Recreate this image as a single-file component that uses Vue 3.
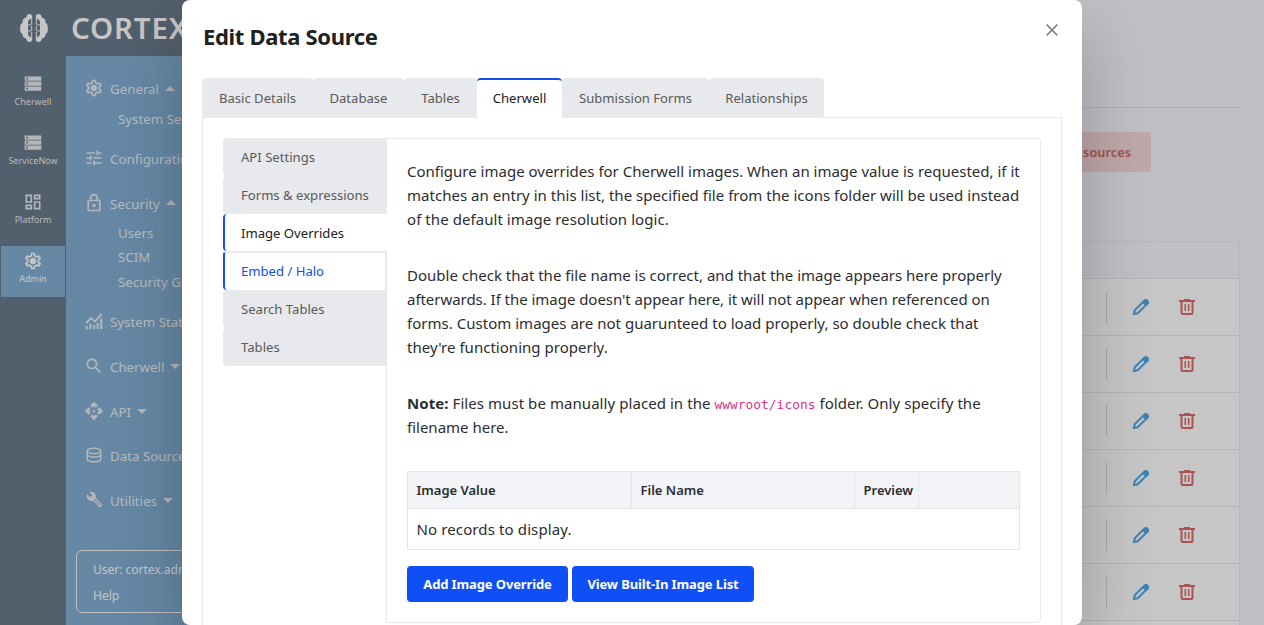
<template>
  <div class="app">
    <aside class="sidebar">
      <header class="brand">
        <svg class="logo" viewBox="0 0 28 28">
          <path d="M9.500 0C7.500 0 6.500 1.500 6.300 3.500 3.500 4 2.200 6 2.700 8.500.5 10 0 12 .3 14c-.4 2.500 0 5 2.200 6-.2 2.500 1.300 4 3.500 4.200C6.500 27 8 28 9.500 28c1.800 0 2.700-1 2.700-2.500 0-1.800-1-2.500-2.700-3L8 20.500V7.500l1.500-2c1.700-.5 2.700-1.200 2.700-3C12.200 1 11.300 0 9.500 0z" />
          <path d="M18.500 0c2 0 3 1.500 3.200 3.500 2.800.5 4.100 2.500 3.600 5 2.200 1.500 2.700 3.500 2.400 5.500.4 2.500 0 5-2.200 6 .2 2.500-1.300 4-3.500 4.200C21.500 27 20 28 18.500 28c-1.800 0-2.700-1-2.700-2.500 0-1.800 1-2.500 2.700-3l1.500-2V7.500l-1.500-2c-1.700-.5-2.700-1.200-2.700-3C15.800 1 16.700 0 18.500 0z" />
          <path class="folds" d="M11.700 3v7.500q-2 1.300-4.200 0M11.700 12v4.500q-2 1.300-4.200 0M11.700 18v7M16.300 3v7.500q2 1.300 4.200 0M16.300 12v4.500q2 1.300 4.200 0M16.300 18v7" />
        </svg>
        <span>CORTEX</span>
      </header>

      <div class="sidebar-body">
        <nav class="rail">
          <a v-for="item in railItems" :key="item.label" class="rail-item" :class="{ active: item.active }">
            <svg viewBox="0 0 24 24"><path :d="icons[item.icon]" /></svg>
            <span>{{ item.label }}</span>
          </a>
        </nav>

        <div class="menu">
          <div v-for="item in menuItems" :key="item.label" class="menu-group">
            <a class="menu-item">
              <svg viewBox="0 0 24 24" :class="item.icon">
                <path :d="icons[item.icon]" />
                <path v-if="item.icon === 'wrench'" class="groove" d="M11 11l9 9" />
              </svg>
              <span>{{ item.label }}</span>
              <i v-if="item.caret" class="caret" :class="item.caret"></i>
            </a>
            <div v-if="item.children" class="submenu">
              <a v-for="child in item.children" :key="child">{{ child }}</a>
            </div>
          </div>
        </div>
      </div>

      <div class="user-box">
        <span>User: cortex.admin</span>
        <span>Help</span>
      </div>
    </aside>

    <main class="page">
      <div class="page-head"></div>
      <button class="delete-button">sources</button>
      <div class="grid">
        <div class="grid-head"></div>
        <div v-for="n in 7" :key="n" class="grid-row">
          <span class="divider"></span>
          <svg class="edit" viewBox="0 0 18 18">
            <path d="M2 16l.7-3.700L12.600 2.400a1.600 1.600 0 0 1 2.300 0l.7.7a1.600 1.600 0 0 1 0 2.300L5.700 15.300z" />
            <path class="tip" d="M10 4.500l3-3h2l2 2v2l-3 3z" />
          </svg>
          <svg class="trash" viewBox="0 0 18 18">
            <path d="M1 3h16M6 2h6M3.500 3v11.500q0 1.500 1.500 1.500h8q1.500 0 1.500-1.500V3" />
            <path class="thin" d="M7.300 6v7M10.700 6v7" />
          </svg>
        </div>
      </div>
    </main>

    <section class="modal">
      <header class="modal-head">
        <h2>Edit Data Source</h2>
        <button class="close">
          <svg viewBox="0 0 12 12"><path d="M.7.7l10.600 10.600M11.300.7L.7 11.300" /></svg>
        </button>
      </header>

      <div class="tabs">
        <button v-for="tab in tabs" :key="tab" :class="{ active: tab === activeTab }" @click="activeTab = tab">
          {{ tab }}
        </button>
      </div>

      <div class="tab-panel">
        <div class="side-tabs">
          <button
            v-for="tab in sideTabs"
            :key="tab"
            :class="{ active: tab === activeSideTab, hovered: tab === 'Embed / Halo' }"
            @click="activeSideTab = tab"
          >
            {{ tab }}
          </button>
        </div>

        <div class="content">
          <p>
            Configure image overrides for Cherwell images. When an image value is requested, if it<br />
            <span class="loose">matches an entry in this list, the specified file from the icons folder will be used instead</span><br />
            <span class="looser">of the default image resolution logic.</span>
          </p>
          <p>
            Double check that the file name is correct, and that the image appears here properly<br />
            <span class="tight">afterwards. If the image doesn't appear here, it will not appear when referenced on</span><br />
            <span class="loose">forms. Custom images are not guarunteed to load properly, so double check that</span><br />
            <span class="loose">they're functioning properly.</span>
          </p>
          <p>
            <span class="looser"><b>Note:</b> Files must be manually placed in the <code>wwwroot/icons</code> folder. Only specify the</span><br />
            filename here.
          </p>

          <table>
            <thead>
              <tr>
                <th class="col-value">Image Value</th>
                <th class="col-file">File Name</th>
                <th class="col-preview">Preview</th>
                <th></th>
              </tr>
            </thead>
            <tbody>
              <tr>
                <td colspan="4">No records to display.</td>
              </tr>
            </tbody>
          </table>

          <div class="actions">
            <button class="add">Add Image Override</button>
            <button class="view">View Built-In Image List</button>
          </div>
        </div>
      </div>
    </section>
  </div>
</template>

<script setup>
import { ref } from 'vue'

const activeTab = ref('Cherwell')
const activeSideTab = ref('Image Overrides')

const tabs = ['Basic Details', 'Database', 'Tables', 'Cherwell', 'Submission Forms', 'Relationships']
const sideTabs = ['API Settings', 'Forms & expressions', 'Image Overrides', 'Embed / Halo', 'Search Tables', 'Tables']

const railItems = [
  { label: 'Cherwell', icon: 'storage' },
  { label: 'ServiceNow', icon: 'storage' },
  { label: 'Platform', icon: 'dashboard' },
  { label: 'Admin', icon: 'gear', active: true },
]

const menuItems = [
  { label: 'General', icon: 'gear', caret: 'up', children: ['System Settings'] },
  { label: 'Configuration', icon: 'tune' },
  { label: 'Security', icon: 'lock', caret: 'up', children: ['Users', 'SCIM', 'Security Groups'] },
  { label: 'System Status', icon: 'chart' },
  { label: 'Cherwell', icon: 'search', caret: 'down' },
  { label: 'API', icon: 'api', caret: 'down' },
  { label: 'Data Sources', icon: 'database' },
  { label: 'Utilities', icon: 'wrench', caret: 'down' },
]

const icons = {
  storage: 'M2 20h20v-5H2v5zm2-3.500h2v2H4v-2zM2 3v5h20V3H2zm4 3.500H4v-2h2v2zM2 14h20V9H2v5zm2-3.500h2v2H4v-2z',
  dashboard: 'M19 5v2h-4V5h4M9 5v6H5V5h4m10 8v6h-4v-6h4M9 17v2H5v-2h4M21 3h-8v6h8V3zM11 3H3v10h8V3zm10 8h-8v10h8V11zm-10 4H3v6h8v-6z',
  gear: 'M19.43 12.98c.04-.32.07-.64.07-.98s-.03-.66-.07-.98l2.11-1.65c.19-.15.24-.42.12-.64l-2-3.46c-.09-.16-.26-.25-.44-.25-.06 0-.12.01-.17.03l-2.49 1c-.52-.4-1.08-.73-1.69-.98l-.38-2.65C14.46 2.18 14.25 2 14 2h-4c-.25 0-.46.18-.49.42l-.38 2.65c-.61.25-1.17.59-1.69.98l-2.49-1c-.06-.02-.12-.03-.18-.03-.17 0-.34.09-.43.25l-2 3.46c-.13.22-.07.49.12.64l2.11 1.65c-.04.32-.07.65-.07.98s.03.66.07.98l-2.11 1.65c-.19.15-.24.42-.12.64l2 3.46c.09.16.26.25.44.25.06 0 .12-.01.17-.03l2.49-1c.52.4 1.08.73 1.69.98l.38 2.65c.03.24.24.42.49.42h4c.25 0 .46-.18.49-.42l.38-2.65c.61-.25 1.17-.59 1.69-.98l2.49 1c.06.02.12.03.18.03.17 0 .34-.09.43-.25l2-3.46c.12-.22.07-.49-.12-.64l-2.11-1.65zm-1.98-1.71c.04.31.05.52.05.73 0 .21-.02.43-.05.73l-.14 1.13.89.7 1.08.84-.7 1.21-1.27-.51-1.04-.42-.9.68c-.43.32-.84.56-1.25.73l-1.06.43-.16 1.13-.2 1.35h-1.4l-.19-1.35-.16-1.13-1.06-.43c-.43-.18-.83-.41-1.23-.71l-.91-.7-1.06.43-1.27.51-.7-1.21 1.08-.84.89-.7-.14-1.13c-.03-.31-.05-.54-.05-.74s.02-.43.05-.73l.14-1.13-.89-.7-1.08-.84.7-1.21 1.27.51 1.04.42.9-.68c.43-.32.84-.56 1.25-.73l1.06-.43.16-1.13.2-1.35h1.39l.19 1.35.16 1.13 1.06.43c.43.18.83.41 1.23.71l.91.7 1.06-.43 1.27-.51.7 1.21-1.07.85-.89.7.14 1.13zM12 8c-2.210 0-4 1.790-4 4s1.790 4 4 4 4-1.790 4-4-1.790-4-4-4z',
  tune: 'M3 17v2h6v-2H3zM3 5v2h10V5H3zm10 16v-2h8v-2h-8v-2h-2v6h2zM7 9v2H3v2h4v2h2V9H7zm14 4v-2H11v2h10zm-6-4h2V7h4V5h-4V3h-2v6z',
  lock: 'M18 8h-1V6c0-2.760-2.240-5-5-5S7 3.240 7 6v2H6c-1.100 0-2 .9-2 2v10c0 1.100.9 2 2 2h12c1.100 0 2-.9 2-2V10c0-1.100-.9-2-2-2zM9 6c0-1.660 1.340-3 3-3s3 1.340 3 3v2H9V6zm9 14H6V10h12v10zm-6-3c1.100 0 2-.9 2-2s-.9-2-2-2-2 .9-2 2 .9 2 2 2z',
  chart: 'M2 13.500L8.500 7l4.500 4 7-8 2 1.400-8.800 9.800-4.600-4.200-5.200 5.200zM2 18h2.500v4H2zM6.500 15H9v7H6.500zM11 17h2.500v5H11zM15.200 14h2.500v8h-2.500zM19.500 9H22v13h-2.500z',
  search: 'M15.5 14h-.79l-.28-.27C15.410 12.590 16 11.110 16 9.500 16 5.910 13.090 3 9.500 3S3 5.910 3 9.500 5.910 16 9.500 16c1.610 0 3.090-.59 4.230-1.570l.27.28v.79l5 4.990L20.490 19l-4.990-5zm-6 0C7.010 14 5 11.990 5 9.500S7.010 5 9.500 5 14 7.010 14 9.500 11.990 14 9.500 14z',
  api: 'M14 12l-2 2-2-2 2-2 2 2zm-2-6l2.120 2.120 2.500-2.500L12 1 7.380 5.620l2.500 2.500L12 6zm-6 6l2.120-2.120-2.500-2.500L1 12l4.620 4.620 2.500-2.500L6 12zm12 0l-2.120 2.120 2.500 2.500L23 12l-4.620-4.620-2.500 2.500L18 12zm-6 6l-2.120-2.120-2.500 2.500L12 23l4.620-4.620-2.500-2.500L12 18z',
  database: 'M12 2C6.500 2 2 3.800 2 6.500v11C2 20.200 6.500 22 12 22s10-1.800 10-4.500v-11C22 3.800 17.500 2 12 2zm0 2c4.500 0 8 1.300 8 2.500S16.500 9 12 9 4 7.700 4 6.500 7.500 4 12 4zm8 5.300v1.900c0 1.300-3.500 2.600-8 2.600s-8-1.300-8-2.600V9.300C5.800 10.400 8.700 11 12 11s6.200-.6 8-1.700zm0 4.700v3.500c0 1.200-3.500 2.500-8 2.500s-8-1.300-8-2.500V14c1.800 1.100 4.700 1.800 8 1.800s6.200-.7 8-1.800z',
  wrench: 'M22.7 19l-9.100-9.100c.9-2.300.4-5-1.500-6.900-2-2-5-2.400-7.400-1.300L9 6 6 9 1.600 4.700C.4 7.100.9 10.100 2.900 12.100c1.900 1.900 4.600 2.400 6.900 1.500l9.100 9.100c.4.4 1 .4 1.400 0l2.300-2.300c.5-.4.5-1.100.1-1.400z',
}
</script>

<style>
body {
  overflow: hidden;
}
</style>

<style scoped>
.app {
  display: flex;
  position: relative;
  width: 1264px;
  height: 625px;
  overflow: hidden;
  background: #bfc0c5;
  font-family: "Noto Sans", "Open Sans", sans-serif;
  white-space: nowrap;
}
.app * {
  box-sizing: border-box;
}
button {
  font-family: inherit;
  border: 0;
  padding: 0;
  cursor: pointer;
}

/* sidebar */
.sidebar {
  display: flex;
  flex-direction: column;
  position: relative;
  width: 256px;
  height: 625px;
  background: #525f6c;
  color: #b9bcbe;
}
.brand {
  display: flex;
  align-items: center;
  gap: 23px;
  height: 56px;
  padding-left: 20px;
  color: #c6c6c6;
  font-size: 29.5px;
  font-weight: 600;
}
.brand span {
  margin-top: -2px;
  letter-spacing: 0.8px;
}
.logo {
  width: 28px;
  height: 28px;
  fill: #c6c6c6;
}
.folds {
  fill: none;
  stroke: #c6c6c6;
  stroke-width: 1;
}
.sidebar-body {
  display: flex;
  flex: 1;
}
.rail {
  display: flex;
  flex-direction: column;
  gap: 8px;
  width: 66px;
  padding: 13px 1px 0;
}
.rail-item {
  display: flex;
  flex-direction: column;
  align-items: center;
  height: 51px;
  padding-top: 5px;
  font-size: 9px;
  line-height: 16px;
}
.rail-item svg {
  width: 20px;
  height: 20px;
  fill: #b4b7b9;
}
.rail-item.active {
  background: #6688a5;
  color: #c9c9c9;
}
.rail-item.active svg {
  fill: #c6c6c6;
}
.menu {
  flex: 1;
  padding: 11px 0 0 18px;
  background: #6688a5;
}
.menu-item {
  display: flex;
  align-items: center;
  height: 44.7px;
  font-size: 13.3px;
}
.menu-item svg {
  width: 20px;
  height: 20px;
  margin: -2px 6px 0 0;
  fill: #b4b7b9;
}
.menu-item .wrench {
  width: 17px;
  height: 17px;
  margin-left: 2px;
  margin-right: 7px;
}
.menu-item .database {
  width: 18px;
  height: 18px;
  margin-left: 1px;
  margin-right: 7px;
}
.groove {
  stroke: #6688a5;
  stroke-width: 1.5;
}
.caret {
  margin-left: 6px;
  border: 5px solid transparent;
}
.caret.up {
  margin-top: -7px;
  border-bottom-color: #b4b7b9;
}
.caret.down {
  margin-top: 4px;
  border-top-color: #b4b7b9;
}
.submenu {
  display: flex;
  flex-direction: column;
  margin: -5px 0 5.4px;
  padding-left: 34px;
  font-size: 13.3px;
  line-height: 24.5px;
}
.user-box {
  display: flex;
  flex-direction: column;
  position: absolute;
  left: 76px;
  bottom: 12px;
  width: 170px;
  height: 63px;
  padding: 6px 16px;
  border: 1px solid #c0c0c0;
  border-radius: 6px;
  color: #c6c6c6;
  font-size: 12.2px;
  line-height: 26px;
  letter-spacing: -0.1px;
}

/* page behind the dialog */
.page {
  flex: 1;
  display: flex;
  flex-direction: column;
  align-items: flex-end;
  padding-right: 24px;
}
.page-head {
  align-self: stretch;
  height: 108px;
  flex-shrink: 0;
  border-bottom: 1px solid #aeb0b3;
}
.delete-button {
  width: 130px;
  height: 40px;
  flex-shrink: 0;
  margin: 24px 89px 69px 0;
  padding-right: 20px;
  border-radius: 4px;
  background: #bfa8a9;
  color: #a0504f;
  font-size: 12.8px;
  font-weight: 600;
  text-align: right;
}
.grid {
  align-self: stretch;
  border: 1px solid #b7b8bc;
}
.grid-head {
  height: 36px;
}
.grid-row {
  display: flex;
  align-items: center;
  justify-content: flex-end;
  height: 57px;
  padding-right: 43px;
  border-top: 1px solid #b4b4b5;
  background: #c6c6c6;
}
.divider {
  width: 1px;
  height: 32px;
  margin-right: 25px;
  background: #a9a9b2;
}
.grid-row svg {
  width: 18px;
  height: 18px;
  fill: none;
  stroke-width: 2;
}
.edit {
  margin-right: 28px;
  stroke: #3f83b2;
}
.edit .tip {
  fill: #3f83b2;
  stroke: none;
}
.trash {
  stroke: #ac5250;
}
.trash .thin {
  stroke-width: 1.5;
}

/* dialog */
.modal {
  position: absolute;
  top: 0;
  left: 182px;
  width: 900px;
  height: 625px;
  padding: 0 20px;
  border-radius: 8px;
  background: #fff;
  box-shadow: 0 32px 70px rgba(0, 0, 0, 0.24);
}
.modal-head {
  display: flex;
  justify-content: space-between;
  height: 78px;
}
h2 {
  margin: 18px 0 0 1px;
  color: #212121;
  font-size: 22px;
  font-weight: 700;
  line-height: 36px;
  letter-spacing: -0.33px;
}
.close {
  height: 12px;
  margin: 24px 4px 0 0;
  background: none;
}
.close svg {
  display: block;
  width: 12px;
  height: 12px;
  stroke: #858585;
  stroke-width: 1.7;
}
.tabs {
  display: grid;
  grid-template-columns: 111px 91px 73px 85px 147px 115px;
  height: 39px;
}
.tabs button {
  height: 40px;
  border-radius: 4px 4px 0 0;
  background: #e8e9ed;
  color: #595959;
  font-size: 13.1px;
  z-index: 1;
}
.tabs .active {
  padding-bottom: 2px;
  border-top: 2px solid #104ff5;
  background: #fff;
  color: #212121;
}
.tab-panel {
  display: flex;
  align-items: flex-start;
  height: 508px;
  padding: 20px;
  border: 1px solid #e8e9ed;
  border-bottom: 0;
}
.side-tabs {
  display: flex;
  flex-direction: column;
  width: 164px;
  margin-right: -1px;
  z-index: 1;
}
.side-tabs button {
  height: 38px;
  padding-left: 18px;
  border-radius: 4px 0 0 4px;
  background: #e8e9ed;
  color: #595959;
  font-size: 13.1px;
  text-align: left;
}
.side-tabs .active,
.side-tabs .hovered {
  padding-left: 16px;
  border-left: 2px solid #104ff5;
  background: #fff;
}
.side-tabs .active {
  height: 37px;
  color: #212121;
}
.side-tabs .hovered {
  height: 39px;
  padding-bottom: 2px;
  border-top: 2px solid #e8e9ed;
  border-right: 2px solid #e8e9ed;
  color: #104ff5;
}
.content {
  width: 655px;
  height: 485px;
  padding: 20px;
  border: 1px solid #e8e9ed;
  border-radius: 0 4px 4px 0;
  color: #2b2d30;
  font-size: 15px;
}
p {
  margin: 0 0 32px;
  line-height: 24px;
}
.loose {
  letter-spacing: 0.02px;
}
.looser {
  letter-spacing: 0.065px;
}
.tight {
  letter-spacing: -0.04px;
}
code {
  color: #d63384;
  font-family: "DejaVu Sans Mono", monospace;
  font-size: 12.8px;
  line-height: 1;
}
table {
  width: 613px;
  border-collapse: collapse;
  table-layout: fixed;
}
th,
td {
  padding: 0 8px 0 8.5px;
  border: 1px solid #e3e5e9;
  text-align: left;
}
th {
  height: 37px;
  background: #f3f4f8;
  font-size: 13px;
  font-weight: 600;
}
td {
  height: 41px;
  letter-spacing: 0.12px;
}
.col-value {
  width: 224px;
}
.col-file {
  width: 223px;
}
.col-preview {
  width: 64px;
  padding-right: 0;
}
.actions {
  display: flex;
  gap: 4px;
  margin-top: 16px;
}
.actions button {
  height: 36px;
  border-radius: 4px;
  background: #104ff5;
  color: #fff;
  font-size: 13px;
  font-weight: 700;
  letter-spacing: -0.12px;
}
.add {
  width: 161px;
}
.view {
  width: 182px;
}
</style>
